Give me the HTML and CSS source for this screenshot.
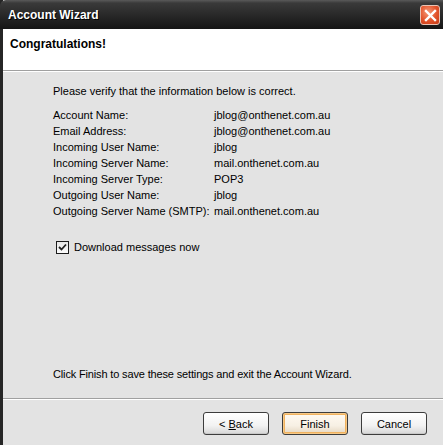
FILE: index.html
```html
<!DOCTYPE html>
<html>
<head>
<meta charset="utf-8">
<link rel="stylesheet" href="styles.css">
</head>
<body>
<div class="window">
  <div class="titlebar">
    <span class="title">Account Wizard</span>
    <span class="close">
      <svg width="13" height="13" viewBox="0 0 13 13"><path d="M2 2 L11 11 M11 2 L2 11" stroke="#fff" stroke-width="2.4" stroke-linecap="square"/></svg>
    </span>
  </div>
  <div class="header">Congratulations!</div>
  <div class="content">
    <p class="intro">Please verify that the information below is correct.</p>
    <div class="grid">
      <span>Account Name:</span><span>jblog@onthenet.com.au</span>
      <span>Email Address:</span><span>jblog@onthenet.com.au</span>
      <span>Incoming User Name:</span><span>jblog</span>
      <span>Incoming Server Name:</span><span>mail.onthenet.com.au</span>
      <span>Incoming Server Type:</span><span>POP3</span>
      <span>Outgoing User Name:</span><span>jblog</span>
      <span>Outgoing Server Name (SMTP):</span><span>mail.onthenet.com.au</span>
    </div>
    <label class="check">
      <span class="box"><svg width="9" height="8" viewBox="0 0 9 8"><path d="M1 4 L3.5 6.5 L8 1.5" fill="none" stroke="#222" stroke-width="1.8"/></svg></span>
      <span>Download messages now</span>
    </label>
    <p class="finish-text">Click Finish to save these settings and exit the Account Wizard.</p>
  </div>
  <div class="footer">
    <button class="btn">&lt; <u>B</u>ack</button>
    <button class="btn default">Finish</button>
    <button class="btn">Cancel</button>
  </div>
</div>
</body>
</html>
```
FILE: styles.css
```css
html, body {
  margin: 0;
  padding: 0;
}
body {
  width: 443px;
  height: 445px;
  overflow: hidden;
  font-family: "Liberation Sans", Arial, sans-serif;
  font-size: 11px;
  color: #000;
}
.window {
  display: flex;
  flex-direction: column;
  height: 445px;
  border-left: 3px solid #262626;
  box-sizing: border-box;
  background: #e3e3e3;
}
.titlebar {
  height: 29px;
  display: flex;
  align-items: center;
  justify-content: space-between;
  padding: 0 3px 0 8px;
  background: linear-gradient(#5a5a5a 0px, #3a3a3a 3px, #2a2a2a 14px, #151515 29px);
  border-top-left-radius: 6px;
  margin-left: -3px;
  flex-shrink: 0;
}
.title {
  color: #fff;
  font-weight: bold;
  font-size: 12px;
  text-shadow: 1px 1px 0 #000;
  margin-top: 1px;
}
.close {
  width: 20px;
  height: 20px;
  border-radius: 3px;
  display: flex;
  align-items: center;
  justify-content: center;
  background: radial-gradient(circle at 40% 35%, #f59a78, #e2522a 55%, #c43a15);
  border: 1px solid #e9c3b4;
  box-sizing: border-box;
  margin-top: 1px;
}
.header {
  height: 42px;
  background: #fff;
  font-weight: bold;
  font-size: 12px;
  padding: 8px 0 0 7px;
  box-sizing: border-box;
  border-bottom: 1px solid #a0a0a0;
  box-shadow: 0 1px 0 #fff;
  flex-shrink: 0;
}
.content {
  flex: 1;
  display: flex;
  flex-direction: column;
  padding: 12px 0 16px 50px;
}
.intro {
  margin: 0;
  line-height: 16px;
}
.grid {
  display: grid;
  grid-template-columns: 161px auto;
  line-height: 16px;
  margin-top: 8px;
}
.check {
  display: flex;
  align-items: center;
  margin-top: 20px;
  line-height: 16px;
  padding-left: 3px;
}
.box {
  width: 13px;
  height: 13px;
  box-sizing: border-box;
  border: 1px solid #1c1c1c;
  background: linear-gradient(#e8e8e8, #fbfbfb);
  display: flex;
  align-items: center;
  justify-content: center;
  margin-right: 5px;
}
.finish-text {
  margin: auto 0 0 0;
  line-height: 16px;
  letter-spacing: -0.15px;
}
.footer {
  height: 47px;
  flex-shrink: 0;
  border-top: 1px solid #a0a0a0;
  box-shadow: inset 0 1px 0 #fff;
  box-sizing: border-box;
  display: flex;
  justify-content: flex-end;
  align-items: flex-start;
  gap: 13px;
  padding: 13px 16px 0 0;
}
.btn {
  width: 66px;
  height: 23px;
  font-family: "Liberation Sans", Arial, sans-serif;
  font-size: 11px;
  color: #000;
  background: linear-gradient(#ffffff, #f2f2f2 60%, #d6d6d6);
  border: 1px solid #3c3c3c;
  border-radius: 3px;
  padding: 0;
  box-shadow: inset 0 -1px 0 #c8c8c8;
}
.btn.default {
  box-shadow: inset 0 0 0 1px #f7c987, inset 0 0 0 2px #f0b25f;
  background: linear-gradient(#fffaf2, #f7f0e4 60%, #e4d6c0);
}
```
